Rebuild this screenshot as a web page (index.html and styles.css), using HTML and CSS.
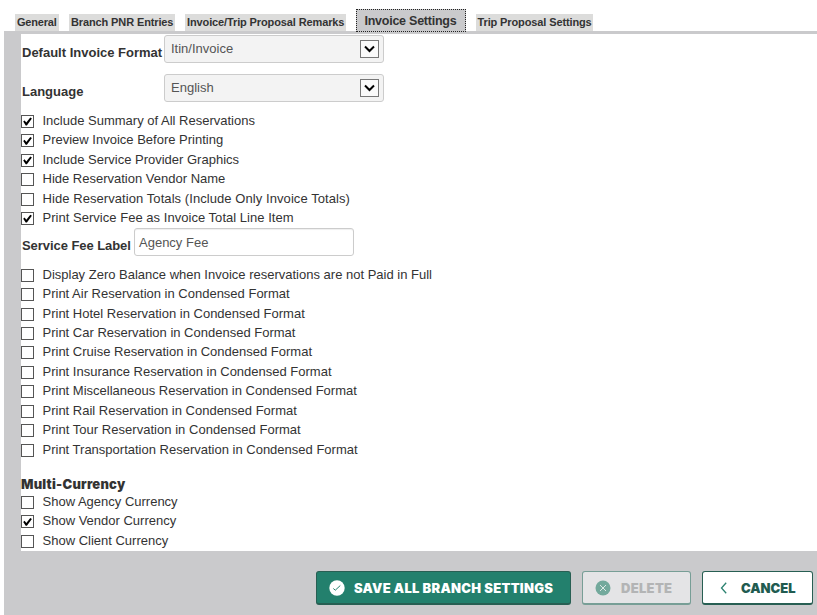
FILE: index.html
```
<!DOCTYPE html>
<html lang="en">
<head>
<meta charset="utf-8">
<title>Invoice Settings</title>
<link rel="stylesheet" href="styles.css">
</head>
<body>
<nav class="tabs">
  <a class="tab general"><span>General</span></a>
  <a class="tab entries"><span>Branch PNR Entries</span></a>
  <a class="tab remarks"><span>Invoice/Trip Proposal Remarks</span></a>
  <a class="tab active"><span>Invoice Settings</span></a>
  <a class="tab proposal"><span>Trip Proposal Settings</span></a>
</nav>
<main class="panel">
  <form class="content">
    <div class="field">
      <span class="label format">Default Invoice Format</span>
      <div class="select"><span>Itin/Invoice</span><i class="arrow"><svg viewBox="0 0 17 16"><path d="M4 5.5l4.5 4.5L13 5.5"/></svg></i></div>
    </div>
    <div class="field">
      <span class="label language">Language</span>
      <div class="select"><span>English</span><i class="arrow"><svg viewBox="0 0 17 16"><path d="M4 5.5l4.5 4.5L13 5.5"/></svg></i></div>
    </div>
    <div class="options first">
      <label class="option"><i class="box on"></i><span>Include Summary of All Reservations</span></label>
      <label class="option"><i class="box on"></i><span>Preview Invoice Before Printing</span></label>
      <label class="option"><i class="box on"></i><span>Include Service Provider Graphics</span></label>
      <label class="option"><i class="box"></i><span>Hide Reservation Vendor Name</span></label>
      <label class="option"><i class="box"></i><span class="loose">Hide Reservation Totals (Include Only Invoice Totals)</span></label>
      <label class="option"><i class="box on"></i><span class="wide">Print Service Fee as Invoice Total Line Item</span></label>
    </div>
    <div class="fee">
      <span class="label fee-label">Service Fee Label</span>
      <div class="input"><span>Agency Fee</span></div>
    </div>
    <div class="options condensed">
      <label class="option"><i class="box"></i><span>Display Zero Balance when Invoice reservations are not Paid in Full</span></label>
      <label class="option"><i class="box"></i><span>Print Air Reservation in Condensed Format</span></label>
      <label class="option"><i class="box"></i><span>Print Hotel Reservation in Condensed Format</span></label>
      <label class="option"><i class="box"></i><span>Print Car Reservation in Condensed Format</span></label>
      <label class="option"><i class="box"></i><span>Print Cruise Reservation in Condensed Format</span></label>
      <label class="option"><i class="box"></i><span>Print Insurance Reservation in Condensed Format</span></label>
      <label class="option"><i class="box"></i><span>Print Miscellaneous Reservation in Condensed Format</span></label>
      <label class="option"><i class="box"></i><span>Print Rail Reservation in Condensed Format</span></label>
      <label class="option"><i class="box"></i><span class="wide">Print Tour Reservation in Condensed Format</span></label>
      <label class="option"><i class="box"></i><span>Print Transportation Reservation in Condensed Format</span></label>
    </div>
    <h2 class="heading"><span>Multi-Currency</span></h2>
    <div class="options">
      <label class="option"><i class="box"></i><span>Show Agency Currency</span></label>
      <label class="option"><i class="box on"></i><span>Show Vendor Currency</span></label>
      <label class="option"><i class="box"></i><span>Show Client Currency</span></label>
    </div>
  </form>
  <footer class="actions">
    <button class="btn save"><svg class="icon" viewBox="0 0 16 16"><circle cx="8" cy="8" r="7.7" fill="#fff"/><path d="M4.3 8.5l2 1.7 5-4.7" stroke="#23806d"/></svg><span>SAVE ALL BRANCH SETTINGS</span></button>
    <button class="btn delete"><svg class="icon" viewBox="0 0 16 16"><circle cx="8" cy="8" r="7.5" fill="#73a99c"/><path d="M5 5l6 6M11 5l-6 6" stroke="#dce8e5"/></svg><span>DELETE</span></button>
    <button class="btn cancel"><svg class="chevron" viewBox="0 0 8 12"><path d="M6.2 .8L1.5 6l4.7 5.2" stroke="#2b8270" stroke-width="1.3"/></svg><span>CANCEL</span></button>
  </footer>
</main>
</body>
</html>
```
FILE: styles.css
```
* { box-sizing: border-box; }
body {
  margin: 0;
  width: 817px;
  height: 615px;
  overflow: hidden;
  background: #fff;
  color: #333;
  font: 13px/19px "Liberation Sans", Arial, sans-serif;
}
.tabs {
  display: flex;
  align-items: flex-end;
  gap: 10px;
  height: 31px;
  padding-left: 15px;
}
.tab {
  height: 17px;
  padding-left: 2px;
  background: #dcdcdb;
  font-size: 11px;
  font-weight: bold;
  line-height: 17px;
  white-space: nowrap;
}
.general { width: 44px; letter-spacing: -0.2px; }
.entries { width: 106px; letter-spacing: -0.12px; }
.remarks { width: 161px; letter-spacing: -0.12px; }
.proposal { width: 117px; padding-left: 1.5px; letter-spacing: -0.12px; }
.active {
  position: relative;
  width: 110px;
  height: 23px;
  margin-bottom: -1px;
  padding-left: 7.5px;
  border: 1px dotted #222;
  background: #cacacc;
  font-size: 12.5px;
  letter-spacing: -0.25px;
  line-height: 23px;
}
.panel {
  height: 584px;
  margin-left: 4px;
  padding: 3px 0 0 17px;
  background: #cacacc;
}
.content {
  height: 517px;
  padding-top: 1px;
  background: #fff;
}
.field {
  display: flex;
  height: 39px;
}
.label {
  width: 143px;
  padding: 8px 0 0 1px;
  font-weight: bold;
  white-space: nowrap;
}
.select {
  display: flex;
  align-items: center;
  justify-content: space-between;
  width: 220px;
  height: 28px;
  padding: 0 4px 0 6px;
  border: 1px solid #ccc;
  border-radius: 3px;
  background: #f3f3f3;
  color: #555;
}
.select span { padding-bottom: 1px; }
.arrow {
  width: 19px;
  height: 18px;
  border: 1px solid #777;
  background: #fafafa;
}
.arrow svg {
  display: block;
  width: 17px;
  height: 16px;
  fill: none;
  stroke: #000;
  stroke-width: 2;
}
.options { display: grid; grid-auto-rows: 19.45px; }
.option { display: flex; white-space: nowrap; }
.box {
  width: 13px;
  height: 13px;
  margin: 4px 8.5px 0 0;
  border: 1px solid #555;
  background: #fff;
}
.on::before {
  content: "";
  display: block;
  width: 11px;
  height: 11px;
  background: #000;
  clip-path: polygon(1.2px 5.6px, 2.6px 4.4px, 4.3px 6.6px, 8.3px 1.6px, 9.9px 2.6px, 4.9px 9.4px, 3.7px 9.4px);
}
.loose { letter-spacing: 0.07px; }
.wide { letter-spacing: 0.03px; }
.first { margin-top: -2px; }
.fee {
  display: flex;
  height: 37px;
}
.fee-label { width: 113px; letter-spacing: -0.06px; }
.input {
  width: 220px;
  height: 28px;
  padding: 4px 4px;
  border: 1px solid #ccc;
  border-radius: 3px;
  box-shadow: inset 0 1px 1px #0001;
  color: #555;
}
.heading {
  height: 17px;
  margin: 16px 0 0;
  padding-top: 1px;
  font: 900 13px/17px Inter, sans-serif;
  letter-spacing: 0.22px;
}
.actions {
  display: flex;
  justify-content: flex-end;
  gap: 11px;
  padding: 20px 4px 0 0;
}
.btn {
  display: flex;
  align-items: center;
  height: 34px;
  padding: 1px 0 0;
  border: 1px solid #285f53;
  border-bottom-width: 2px;
  border-radius: 3px;
  font: 900 13px/18px Inter, sans-serif;
  white-space: nowrap;
}
.btn svg { fill: none; }
.icon { width: 16px; height: 16px; }
.save { width: 255px; padding-left: 12px; gap: 9px; background: #23806d; color: #fff; letter-spacing: 0.28px; }
.delete { width: 109px; padding-left: 12px; gap: 10px; border-color: #779e96; background: #e4e4e6; color: #b3b4b5; letter-spacing: 0.3px; }
.cancel { width: 111px; padding-left: 17px; gap: 13px; background: #fff; color: #215b50; }
.chevron { width: 8px; height: 12px; }
```
